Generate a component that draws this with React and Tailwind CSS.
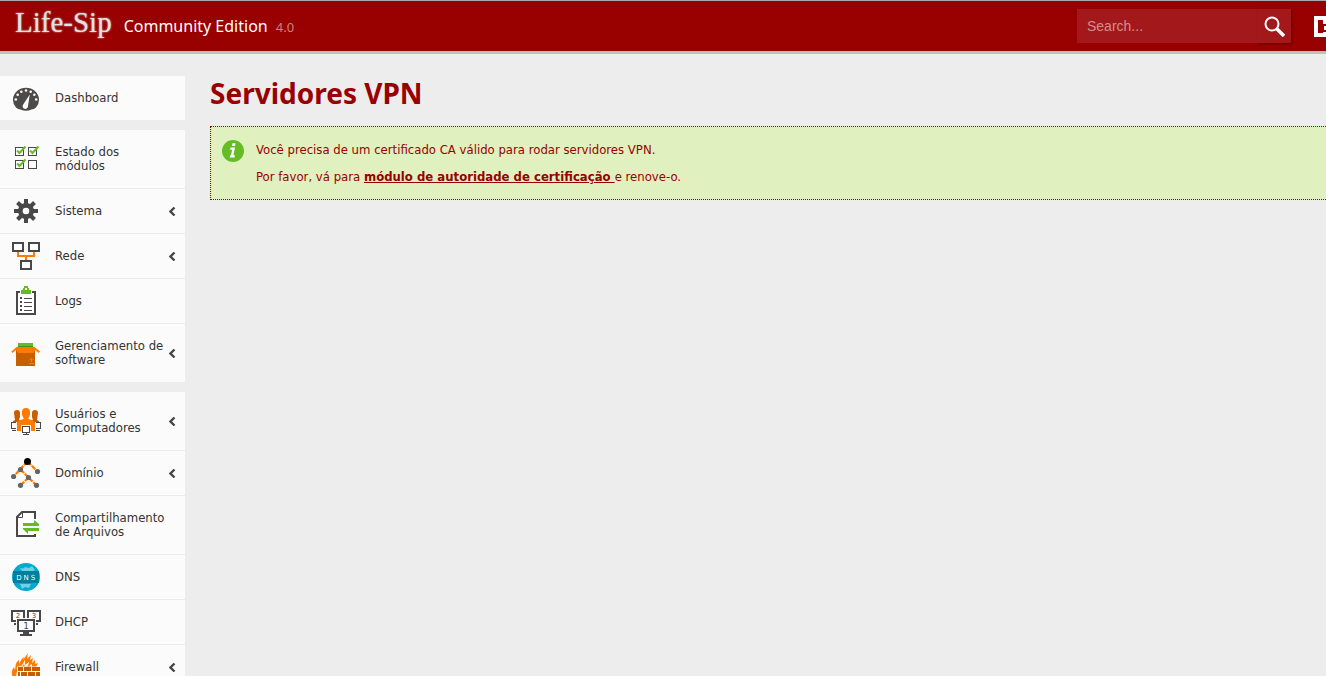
import React from "react";

const DARK = "#484848";
const ORANGE = "#ff7b00";
const BROWN = "#c65f00";
const GREEN = "#66bb22";

function Icon({ children, crisp }) {
  return (
    <svg
      className="size-[30px] shrink-0"
      viewBox="0 0 30 30"
      shapeRendering={crisp ? "crispEdges" : "auto"}
      aria-hidden="true"
    >
      {children}
    </svg>
  );
}

const DashboardIcon = () => (
  <Icon>
    <path d="M5 24.500A13 12 0 1 1 25 24.500Q23 26.500 20.500 26.500Q15 29 9.500 26.500Q7 26.500 5 24.500Z" fill="#4d4b49" />
    <g fill="#fbfbfb">
      <circle cx="4.800" cy="16.500" r="1.300" />
      <circle cx="6.700" cy="11.700" r="1.300" />
      <circle cx="10.300" cy="8.700" r="1.300" />
      <circle cx="15" cy="7.500" r="1.300" />
      <circle cx="19.700" cy="8.700" r="1.300" />
      <circle cx="23.300" cy="11.700" r="1.300" />
      <circle cx="25.200" cy="16.500" r="1.300" />
      <path d="M18.800 11.500L12.200 21.500A2.700 2.700 0 1 0 17 23Z" />
    </g>
  </Icon>
);

const ModulesIcon = () => (
  <Icon>
    <g fill="#fff" stroke={DARK} shapeRendering="crispEdges">
      <rect x="4.500" y="3.500" width="8" height="8" />
      <rect x="17.500" y="3.500" width="8" height="8" />
      <rect x="4.500" y="16.500" width="8" height="8" />
      <rect x="17.500" y="16.500" width="8" height="8" />
    </g>
    <g fill="none" stroke={GREEN} strokeWidth="2">
      <path d="M6 6.500L8.500 9L14.500 2.500" />
      <path d="M19 6.500L21.500 9L27.500 2.500" />
      <path d="M6 19.500L8.500 22L14.500 15.500" />
    </g>
  </Icon>
);

const SystemIcon = () => (
  <Icon>
    <g fill={DARK}>
      {[0, 45, 90, 135].map((a) => (
        <rect key={a} x="13" y="3" width="4" height="24" transform={`rotate(${a} 15 15)`} />
      ))}
      <circle cx="15" cy="15" r="8" />
    </g>
    <circle cx="15" cy="15" r="3.300" fill="#fff" />
  </Icon>
);

const NetworkIcon = () => (
  <Icon crisp>
    <path d="M7 11V15H23V11M15 15V19" fill="none" stroke={ORANGE} strokeWidth="2" />
    <g fill="#fff" stroke={DARK} strokeWidth="2">
      <rect x="2" y="2" width="10" height="8" />
      <rect x="18" y="2" width="10" height="8" />
      <rect x="10" y="20" width="10" height="8" />
    </g>
  </Icon>
);

const LogsIcon = () => (
  <Icon crisp>
    <path d="M9 6H6V28H24V6H21" fill="#fff" stroke={DARK} strokeWidth="2" />
    <path d="M10 8V4H12V2H13V0H17V2H18V4H20V8ZM14 2V4H16V2Z" fill={GREEN} fillRule="evenodd" />
    <path d="M9 12H11M9 16H11M9 20H11M9 24H11" stroke={DARK} strokeWidth="2" />
    <path d="M13 12.500H21M13 16.500H21M13 20.500H21M13 24.500H21" stroke={DARK} />
  </Icon>
);

const SoftwareIcon = () => (
  <Icon>
    <rect x="5" y="10" width="19" height="18" fill={BROWN} shapeRendering="crispEdges" />
    <path d="M5.500 9H23.500L29 13.500L27.800 15L24 12L22.500 15H7L5 12L1.500 15L.300 13.500Z" fill={ORANGE} />
    <rect x="7" y="5" width="15" height="4" fill={GREEN} />
    <rect x="7" y="8" width="15" height="1" fill="#3f9320" />
    <path d="M18 22.500L20.500 20L23 22.500M20.500 20.500V24M18 25.500H23" fill="none" stroke={ORANGE} />
  </Icon>
);

const UsersIcon = () => (
  <Icon>
    <g fill={BROWN}>
      <path d="M3 7Q3 4 6 4T9 7V11L8 14H10L7 18H2V15L4 14Z" />
      <path d="M27 7Q27 4 24 4T21 7V11L22 14H20L23 18H28V15L26 14Z" />
    </g>
    <path d="M11 6Q11 2 15 2T19 6V9L17.500 12V13L22 14.500Q24 15.500 24 18V25H6V18Q6 15.500 8 14.500L12.500 13V12L11 9Z" fill={ORANGE} />
    <path d="M0 16H6V24H0ZM24 16H30V24H24Z" fill="#fbfbfb" />
    <g fill="none" stroke={DARK} shapeRendering="crispEdges">
      <path d="M5 16.500H.500V22.500H5M25 16.500H29.500V22.500H25M1 24.500H5M25 24.500H29" />
    </g>
    <path d="M10 19H20V27H10Z" fill="#fbfbfb" />
    <g fill="#fff" stroke={DARK} shapeRendering="crispEdges">
      <rect x="11.500" y="20.500" width="7" height="6" />
      <path d="M15 27V29M12 28.500H18" />
    </g>
  </Icon>
);

const DomainIcon = () => (
  <Icon>
    <path d="M16.500 3.500L2.500 18.500M16.500 3.500L26.500 13.500M9.500 11.500L25.500 27.500M17.500 19.500L9.500 27.500" stroke={ORANGE} strokeWidth="2.300" strokeDasharray="5 1" />
    <g fill="#666">
      <circle cx="9.500" cy="11.500" r="2.600" />
      <circle cx="26.500" cy="13.500" r="2.600" />
      <circle cx="2.600" cy="18.500" r="2.600" />
      <circle cx="17.500" cy="19.500" r="2.600" />
      <circle cx="9.500" cy="27.300" r="2.600" />
      <circle cx="25.500" cy="27.300" r="2.600" />
    </g>
    <circle cx="16.500" cy="3.500" r="3.500" fill="#000" />
  </Icon>
);

const SharingIcon = () => (
  <Icon>
    <path d="M24 9V2H11L6 7V26H24V24" fill="#fff" stroke={DARK} strokeWidth="2" />
    <path d="M11.500 2V7.500H6" fill="none" stroke={DARK} />
    <path d="M12 13H23V10L28 14V16H12ZM28 18H12V19L17 24V21H28Z" fill={GREEN} />
  </Icon>
);

const DnsIcon = () => (
  <Icon>
    <circle cx="15" cy="15" r="14" fill="#00a9ce" />
    <path d="M8 5Q12 8 14 5L18 6L21 4L24 8L20 10H12Z M9 22H20L18 26L14 25L11 27Z" fill="#6fd0e6" />
    <rect x="2" y="9" width="26" height="12" fill="#007f9f" />
    <g fontSize="7" textAnchor="middle" fontFamily="DejaVu Sans, sans-serif" fill="#fff">
      <text x="8" y="18">D</text>
      <text x="15" y="18">N</text>
      <text x="22" y="18">S</text>
    </g>
  </Icon>
);

const DhcpIcon = () => (
  <Icon crisp>
    <g fill="#fff" stroke={DARK} strokeWidth="2">
      <rect x="1" y="4" width="12" height="10" />
      <rect x="17" y="4" width="12" height="10" />
    </g>
    <path d="M3 17H6M24 17H27" stroke={DARK} strokeWidth="2" />
    <g fontSize="7" fontFamily="DejaVu Sans, sans-serif" textAnchor="middle" fill={DARK}>
      <text x="7" y="11">2</text>
      <text x="23" y="11">3</text>
    </g>
    <rect x="5" y="11" width="20" height="14" fill="#fbfbfb" />
    <rect x="7" y="13" width="16" height="11" fill="#fff" stroke={DARK} strokeWidth="2" />
    <text x="15" y="22" fontSize="9" fontFamily="DejaVu Sans, sans-serif" textAnchor="middle" fill={DARK}>1</text>
    <path d="M12 25H18V27H21V29H9V27H12Z" fill={DARK} />
  </Icon>
);

const FirewallIcon = () => (
  <Icon>
    <path d="M4 29C0 24 0 19 3 15L4 18C5 13 4 11 8 8L8 12C10 9 10 7 13 5L12 8L17 1L16 7L20 3L19 8L22 6L21 11L24 8L24 12L27 11L25 15H7Z" fill={ORANGE} />
    <path d="M7 18L9 13L10 15L14 8L14 13L18 10L17 14L21 12L21 16Z" fill="#fbfbfb" />
    <path d="M10 16L13 12L14 15L18 13L21 15V17H9Z" fill={ORANGE} />
    <rect x="6" y="14.500" width="23" height="15.500" fill="#fbfbfb" />
    <g fill={BROWN} shapeRendering="crispEdges">
      <path d="M7 15H12V19H7ZM13 15H20V19H13ZM21 15H29V19H21ZM7 20H9V24H7ZM10 20H16V24H10ZM17 20H24V24H17ZM25 20H29V24H25ZM7 25H12V29H7ZM13 25H20V29H13ZM21 25H29V29H21Z" />
    </g>
  </Icon>
);

const GROUPS = [
  [{ label: "Dashboard", icon: DashboardIcon }],
  [
    { label: "Estado dos módulos", icon: ModulesIcon },
    { label: "Sistema", icon: SystemIcon, sub: true },
    { label: "Rede", icon: NetworkIcon, sub: true },
    { label: "Logs", icon: LogsIcon },
    { label: "Gerenciamento de software", icon: SoftwareIcon, sub: true },
  ],
  [
    { label: "Usuários e Computadores", icon: UsersIcon, sub: true },
    { label: "Domínio", icon: DomainIcon, sub: true },
    { label: "Compartilhamento de Arquivos", icon: SharingIcon },
    { label: "DNS", icon: DnsIcon },
    { label: "DHCP", icon: DhcpIcon },
    { label: "Firewall", icon: FirewallIcon, sub: true },
  ],
];

function MenuItem({ item }) {
  const ItemIcon = item.icon;
  return (
    <li>
      <a href="#" className="flex min-h-11 items-center pl-[11px] text-[13px] leading-[14px] text-[#333]">
        <ItemIcon />
        <span className="my-[15px] ml-[14px] w-[114px] shrink-0">{item.label}</span>
        {item.sub && (
          <svg className="h-[9px] w-[7px] shrink-0" viewBox="0 0 7 9" aria-hidden="true">
            <path d="M5.500 .500L1.500 4.500L5.500 8.500" fill="none" stroke="#444" strokeWidth="2.300" />
          </svg>
        )}
      </a>
    </li>
  );
}

export default function App() {
  return (
    <div className="h-screen overflow-hidden bg-[#ededed] font-['DejaVu_Sans_Condensed','DejaVu_Sans',sans-serif]">
      <header className="flex h-[54px] items-start overflow-hidden border-t border-b-3 border-t-[#aaa] border-b-[#bfbfbf] bg-[#990000]">
        <a href="#" className="flex items-baseline pl-[15px] pt-px text-white">
          <span className="font-['Liberation_Serif',serif] text-[29px] leading-[40px] text-[#e2e2e2] [text-shadow:0_0_2px_#ccc]">Life-Sip</span>
          <span className="ml-3 font-['Noto_Sans',sans-serif] text-base">Community Edition</span>
          <span className="ml-2 font-['Noto_Sans',sans-serif] text-[13px] text-[#cc8080]">4.0</span>
        </a>
        <form className="mt-2 ml-auto flex h-[34px] w-[214px] shrink-0 bg-[#a3191b]">
          <input
            type="text"
            aria-label="Search"
            placeholder="Search..."
            className="min-w-0 flex-1 bg-transparent pl-[10px] font-['Liberation_Sans',sans-serif] text-sm text-white outline-none placeholder:text-[#d58c8d]"
          />
          <button type="button" aria-label="Search" className="flex w-[34px] items-center justify-center shadow-[1px_1px_2px_#600000]">
            <svg className="size-[22px]" viewBox="0 0 22 22" fill="none" stroke="#fff">
              <circle cx="9" cy="9" r="6.500" strokeWidth="2" />
              <path d="M13.500 13.500L21 21" strokeWidth="3.500" />
            </svg>
          </button>
        </form>
        <button type="button" aria-label="Log out" className="mt-[15px] ml-[23px] w-3 shrink-0">
          <svg className="h-[21px] w-3" viewBox="0 0 12 21" shapeRendering="crispEdges">
            <path d="M0 0H12V21H0Z" fill="#fff" />
            <path d="M4 4H9V8H12V10H10V14H12V16H9V17H4Z" fill="#990000" />
          </svg>
        </button>
      </header>
      <div className="flex items-start pt-[22px]">
        <nav className="flex w-[185px] shrink-0 flex-col gap-[10px]">
          {GROUPS.map((group) => (
            <ul key={group[0].label} className="divide-y divide-[#ebebeb] bg-[#fbfbfb]">
              {group.map((item) => (
                <MenuItem key={item.label} item={item} />
              ))}
            </ul>
          ))}
        </nav>
        <main className="min-w-0 flex-1 pl-[25px] text-[#990000]">
          <h1 className="font-['Noto_Sans',sans-serif] text-[28px] leading-[34px] font-bold">Servidores VPN</h1>
          <div className="mt-4 flex border border-r-0 border-dotted border-[#990000] bg-[#e0f1bf] pt-[13px] pb-[13px] pl-[11px] text-[13px] leading-[18px]">
            <svg className="size-[22px] shrink-0" viewBox="0 0 22 22" aria-hidden="true">
              <circle cx="11" cy="11" r="11" fill="#65bd25" />
              <path d="M10.500 3.200H13.500L13 6H10ZM8.500 7.500H13L11.400 15.300H13L12.600 17.500H7.800L8.200 15.300H9L10.100 9.700H8.100Z" fill="#fff" />
            </svg>
            <div className="ml-3 flex flex-col gap-[9px] pt-px">
              <p>Você precisa de um certificado CA válido para rodar servidores VPN.</p>
              <p>
                Por favor, vá para{" "}
                <a href="#" className="font-bold underline">módulo de autoridade de certificação </a>
                e renove-o.
              </p>
            </div>
          </div>
        </main>
      </div>
    </div>
  );
}
